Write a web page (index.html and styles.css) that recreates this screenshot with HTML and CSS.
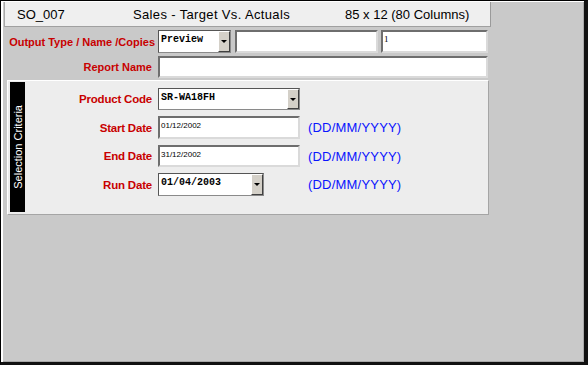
FILE: index.html
```html
<!DOCTYPE html>
<html lang="en">
<head>
    <meta charset="UTF-8">
    <meta name="viewport" content="width=device-width, initial-scale=1.0">
    <title>SO_007 Sales - Target Vs. Actuals</title>
    <link rel="stylesheet" href="styles.css">
</head>
<body>
    <div class="window">
        <div class="header">
            <span class="report-code">SO_007</span>
            <span class="report-title">Sales - Target Vs. Actuals</span>
            <span class="report-size">85 x 12 (80 Columns)</span>
        </div>

        <div class="form-row first">
            <label class="label">Output Type / Name /Copies</label>
            <div class="select output-type">
                <span class="select-value">Preview</span>
                <span class="select-btn"><i class="arrow"></i></span>
            </div>
            <div class="field output-name"></div>
            <div class="field copies serif">1</div>
        </div>
        <div class="form-row second">
            <label class="label">Report Name</label>
            <div class="field report-name"></div>
        </div>

        <div class="panel">
            <div class="panel-tab"><span>Selection Criteria</span></div>
            <div class="criteria">
                <label class="label">Product Code</label>
                <div class="select wide">
                    <span class="select-value">SR-WA18FH</span>
                    <span class="select-btn"><i class="arrow"></i></span>
                </div>
                <span></span>

                <label class="label">Start Date</label>
                <div class="field date tall">01/12/2002</div>
                <span class="hint">(DD/MM/YYYY)</span>

                <label class="label">End Date</label>
                <div class="field date">31/12/2002</div>
                <span class="hint">(DD/MM/YYYY)</span>

                <label class="label">Run Date</label>
                <div class="select narrow tall">
                    <span class="select-value">01/04/2003</span>
                    <span class="select-btn"><i class="arrow"></i></span>
                </div>
                <span class="hint">(DD/MM/YYYY)</span>
            </div>
        </div>
    </div>
</body>
</html>
```

FILE: styles.css
```css
body {
    margin: 0;
    font-family: "Liberation Sans", Arial, sans-serif;
    background: #c8c8c8;
}
.window {
    width: 588px;
    height: 365px;
    box-sizing: border-box;
    background: #c9c9c9;
    border: 1px solid #000;
    border-right: 4px solid #111;
    border-bottom: 3px solid #111;
    padding: 1px 0 0 3px;
    box-shadow: inset 2px 1px 0 #fff, inset -1px -1px 0 #a8a8a8;
}
.header {
    width: 487px;
    height: 25px;
    box-sizing: border-box;
    display: flex;
    align-items: center;
    background: #efefef;
    border-left: 1px solid #a8a8a8;
    border-right: 1px solid #9a9a9a;
    border-bottom: 1px solid #a0a0a0;
    font-size: 13px;
    color: #000;
    padding-left: 12px;
}
.report-code {
    width: 116px;
}
.report-title {
    width: 212px;
    letter-spacing: 0.35px;
}
.form-row {
    display: flex;
    align-items: center;
}
.form-row.first {
    margin-top: 3px;
    height: 23px;
}
.form-row.second {
    margin-top: 3px;
    height: 22px;
}
.form-row .label {
    width: 151px;
    margin-right: 3px;
}
.form-row.second .label {
    width: 148px;
    margin-right: 6px;
}
.label {
    font-size: 11px;
    font-weight: bold;
    color: #c80000;
    text-align: right;
    white-space: nowrap;
}
.field {
    height: 100%;
    box-sizing: border-box;
    background: #fff;
    border-top: 2px solid #6e6e6e;
    border-left: 2px solid #6e6e6e;
    border-right: 2px solid #dadada;
    border-bottom: 2px solid #dadada;
    font-size: 8px;
    padding: 3px 0 0 1px;
    color: #000;
}
.serif {
    font-family: "Liberation Serif", "Times New Roman", serif;
    font-size: 9px;
    padding-top: 2px;
}
.output-name {
    width: 143px;
    margin-left: 4px;
}
.copies {
    width: 107px;
    margin-left: 3px;
}
.report-name {
    width: 330px;
}
.select {
    height: 100%;
    box-sizing: border-box;
    display: flex;
    background: #fff;
    border: 1px solid #8a8a8a;
    border-top-color: #555;
    border-left-color: #555;
}
.select-value {
    flex: 1;
    font-family: "Liberation Mono", "Courier New", monospace;
    font-weight: bold;
    font-size: 10px;
    padding: 3px 0 0 2px;
    color: #000;
}
.select-btn {
    width: 12px;
    box-sizing: border-box;
    background: #d4d0c8;
    border-top: 1px solid #fff;
    border-left: 1px solid #fff;
    border-right: 1px solid #404040;
    border-bottom: 1px solid #404040;
    display: flex;
    align-items: center;
    justify-content: center;
}
.arrow {
    width: 0;
    height: 0;
    border-left: 3px solid transparent;
    border-right: 3px solid transparent;
    border-top: 3px solid #000;
}
.output-type {
    width: 73px;
}
.panel {
    width: 482px;
    height: 135px;
    box-sizing: border-box;
    margin: 2px 0 0 3px;
    display: flex;
    background: #ededed;
    border-top: 1px solid #fff;
    border-left: 1px solid #fff;
    border-right: 1px solid #a5a5a5;
    border-bottom: 1px solid #a5a5a5;
    padding: 1px 0 2px 2px;
}
.panel-tab {
    width: 15px;
    background: #000;
    color: #fff;
    font-size: 11px;
    display: flex;
    align-items: center;
    justify-content: center;
}
.panel-tab span {
    writing-mode: vertical-rl;
    transform: rotate(180deg);
    white-space: nowrap;
}
.criteria {
    display: grid;
    grid-template-columns: 133px 150px auto;
    grid-template-rows: 22px 23px 22px 23px;
    row-gap: 6px;
    align-items: center;
    align-content: start;
    padding-top: 6px;
}
.criteria .label {
    padding-right: 6px;
    font-size: 11.5px;
    letter-spacing: -0.2px;
}
.wide,
.date {
    width: 142px;
    height: 22px;
}
.narrow {
    width: 106px;
}
.tall {
    height: 23px;
}
.hint {
    font-size: 13px;
    color: #0a14ff;
    letter-spacing: 0.2px;
}
```
